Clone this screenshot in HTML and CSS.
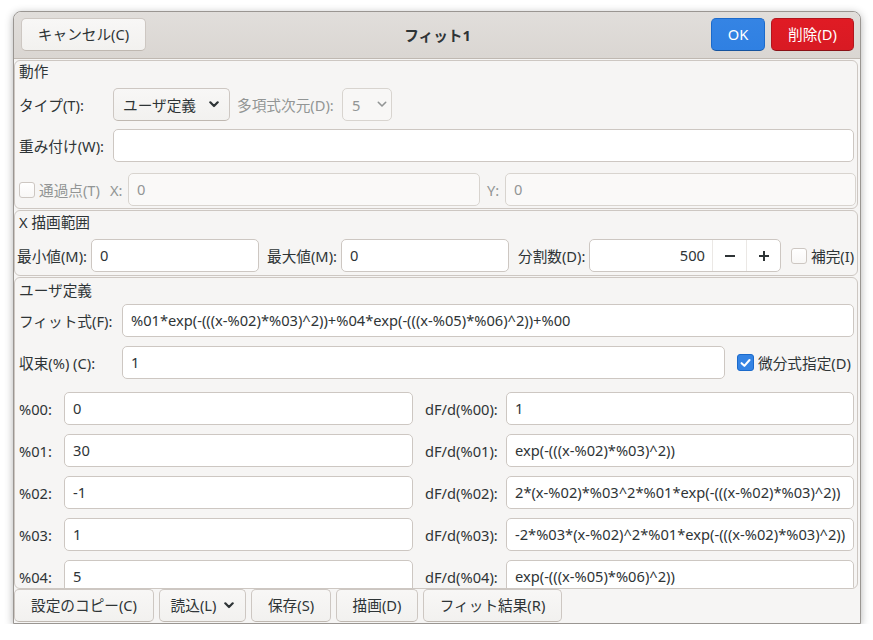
FILE: index.html
```html
<!DOCTYPE html>
<html lang="ja">
<head>
<meta charset="utf-8">
<title>フィット1</title>
<link rel="stylesheet" href="styles.css">
</head>
<body>
<div class="window">
  <header class="headerbar">
    <div class="hb-left"><button class="btn">キャンセル(C)</button></div>
    <div class="title">フィット1</div>
    <div class="hb-right">
      <button class="btn btn-ok">OK</button>
      <button class="btn btn-del">削除(D)</button>
    </div>
  </header>

  <div class="content">
    <section class="frame f1">
      <div class="ftitle">動作</div>
      <div class="row row-type">
        <span class="lbl lbl-94">タイプ(T):</span>
        <button class="combo combo-type">ユーザ定義<svg class="chev" viewBox="0 0 10 7" width="10" height="7"><path d="M1.3 1.3 L5 5 L8.7 1.3"/></svg></button>
        <span class="lbl dis lbl-deg">多項式次元(D):</span>
        <button class="combo combo-deg dis">5<svg class="chev" viewBox="0 0 10 7" width="10" height="7"><path d="M1.3 1.3 L5 5 L8.7 1.3"/></svg></button>
      </div>
      <div class="row row-weight">
        <span class="lbl lbl-94">重み付け(W):</span>
        <div class="entry grow"></div>
      </div>
      <div class="row row-pass">
        <span class="check"></span>
        <span class="lbl dis lbl-pass">通過点(T)</span>
        <span class="lbl dis lbl-x">X:</span>
        <div class="entry disabled e-x">0</div>
        <span class="lbl dis lbl-y">Y:</span>
        <div class="entry grow disabled">0</div>
      </div>
    </section>

    <section class="frame f2">
      <div class="ftitle">X 描画範囲</div>
      <div class="row row-range">
        <span class="lbl l-min">最小値(M):</span>
        <div class="entry e-range">0</div>
        <span class="lbl l-max">最大値(M):</span>
        <div class="entry e-range">0</div>
        <span class="lbl l-div">分割数(D):</span>
        <div class="spin">
          <div class="spin-val">500</div>
          <div class="spin-btn"><svg viewBox="0 0 12 12" width="12" height="12"><path d="M1 6 H11"/></svg></div>
          <div class="spin-btn"><svg viewBox="0 0 12 12" width="12" height="12"><path d="M1 6 H11 M6 1 V11"/></svg></div>
        </div>
        <span class="check c-interp"></span>
        <span class="lbl l-interp">補完(I)</span>
      </div>
    </section>

    <section class="frame f3">
      <div class="ftitle">ユーザ定義</div>
      <div class="row row-fit">
        <span class="lbl lbl-103">フィット式(F):</span>
        <div class="entry grow">%01*exp(-(((x-%02)*%03)^2))+%04*exp(-(((x-%05)*%06)^2))+%00</div>
      </div>
      <div class="row row-conv">
        <span class="lbl lbl-103">収束(%) (C):</span>
        <div class="entry e-conv">1</div>
        <span class="check checked c-deriv"><svg viewBox="0 0 16 16" width="16" height="16"><path d="M3.8 8.2 L6.8 11 L12.3 4.8"/></svg></span>
        <span class="lbl l-deriv">微分式指定(D)</span>
      </div>
      <div class="params">
        <span class="lbl">%00:</span>
        <div class="entry">0</div>
        <span class="lbl pl">dF/d(%00):</span>
        <div class="entry">1</div>

        <span class="lbl">%01:</span>
        <div class="entry">30</div>
        <span class="lbl pl">dF/d(%01):</span>
        <div class="entry">exp(-(((x-%02)*%03)^2))</div>

        <span class="lbl">%02:</span>
        <div class="entry">-1</div>
        <span class="lbl pl">dF/d(%02):</span>
        <div class="entry">2*(x-%02)*%03^2*%01*exp(-(((x-%02)*%03)^2))</div>

        <span class="lbl">%03:</span>
        <div class="entry">1</div>
        <span class="lbl pl">dF/d(%03):</span>
        <div class="entry">-2*%03*(x-%02)^2*%01*exp(-(((x-%02)*%03)^2))</div>

        <span class="lbl">%04:</span>
        <div class="entry">5</div>
        <span class="lbl pl">dF/d(%04):</span>
        <div class="entry">exp(-(((x-%05)*%06)^2))</div>
      </div>
    </section>
  </div>

  <footer class="actions">
    <button class="btn a1">設定のコピー(C)</button>
    <button class="btn a2">読込(L)<svg class="chev" viewBox="0 0 10 7" width="10" height="7"><path d="M1.3 1.3 L5 5 L8.7 1.3"/></svg></button>
    <button class="btn a3">保存(S)</button>
    <button class="btn a4">描画(D)</button>
    <button class="btn a5">フィット結果(R)</button>
  </footer>
</div>
</body>
</html>
```

FILE: styles.css
```css
* { box-sizing: border-box; }

html, body {
  margin: 0;
  padding: 0;
  background: #ffffff;
}

body {
  font-family: "Noto Sans", "Noto Sans CJK JP", sans-serif;
  font-size: 14.67px;
  line-height: 20px;
  color: #2e3436;
}

.window {
  margin: 11px 0 0 13px;
  width: 848px;
  height: 613px;
  border: 1px solid #9a9692;
  border-radius: 8px 8px 0 0;
  box-shadow: 0 2px 8px rgba(0, 0, 0, 0.3);
  background: #f6f5f4;
  display: flex;
  flex-direction: column;
  overflow: hidden;
}

/* header bar */
.headerbar {
  flex: none;
  height: 47px;
  display: grid;
  grid-template-columns: 1fr auto 1fr;
  align-items: center;
  padding: 0 6px 1px 7px;
  background: linear-gradient(to top, #dad6d2, #e1dedb);
  border-bottom: 1px solid #bfb8b1;
  border-radius: 7px 7px 0 0;
}

.hb-left { display: flex; }
.hb-right { display: flex; justify-content: flex-end; gap: 6px; }

.title {
  font-weight: bold;
  color: #2e3436;
}

.btn {
  font: inherit;
  line-height: 1;
  color: #2e3436;
  height: 33px;
  padding: 0 10px;
  border: 1px solid #cdc7c2;
  border-bottom-color: #bfb8b1;
  border-radius: 5px;
  background: linear-gradient(to top, #f2f1ef, #f8f7f6);
  display: inline-flex;
  align-items: center;
  justify-content: center;
  white-space: nowrap;
  flex: none;
}

.hb-left .btn { width: 125px; }

.btn-ok {
  width: 54px;
  color: #ffffff;
  background: linear-gradient(to top, #2f80e2, #3584e4);
  border-color: #1b6acb;
  border-bottom-color: #15539e;
}

.btn-del {
  width: 83px;
  color: #ffffff;
  background: linear-gradient(to top, #d81a23, #e01b24);
  border-color: #b2161d;
  border-bottom-color: #8a1116;
}

/* content */
.content {
  flex: none;
  height: 530px;
  padding-top: 1px;
  display: flex;
  flex-direction: column;
  gap: 1px;
  overflow: hidden;
}

.frame {
  flex: none;
  margin-right: 2px;
  border: 1px solid #cdc7c2;
  border-radius: 6px;
  overflow: hidden;
  display: flex;
  flex-direction: column;
}

.f1 { height: 149px; padding: 0 3px 0 4px; }
.f2 { height: 66px; padding: 1px 3px 0 2px; }
.f3 { height: 312px; padding: 2px 3px 0 4px; }

.ftitle { height: 20px; line-height: 20px; }
.f2 .ftitle { padding-left: 2px; }

.row {
  display: flex;
  align-items: center;
  height: 33px;
  flex: none;
}

.lbl { white-space: nowrap; flex: none; }
.dis { color: #929595; }

.lbl-94 { width: 94px; }
.lbl-103 { width: 103px; }

.row-type { margin-top: 7px; }
.row-weight { margin-top: 8px; }
.row-pass { margin-top: 11px; margin-right: -2px; }

.entry {
  height: 33px;
  border: 1px solid #cdc7c2;
  border-radius: 5px;
  background: #ffffff;
  padding: 0 8px;
  line-height: 31px;
  white-space: nowrap;
  overflow: hidden;
  color: #2e3436;
}

.entry.disabled {
  background: #faf9f8;
  border-color: #d8d4cf;
  color: #929595;
}

.grow { flex: 1; min-width: 0; }

.combo {
  font: inherit;
  color: #2e3436;
  height: 33px;
  border: 1px solid #cdc7c2;
  border-bottom-color: #bfb8b1;
  border-radius: 5px;
  background: linear-gradient(to top, #f2f1ef, #f8f7f6);
  display: inline-flex;
  align-items: center;
  padding: 0 0 0 9px;
  flex: none;
}

.combo-type { width: 117px; gap: 13px; }
.combo-deg { width: 50px; gap: 17px; border-color: #d8d4cf; background: #f8f7f6; color: #929595; }

.lbl-deg { margin-left: 7px; width: 105px; }

.chev { flex: none; }
.chev path { fill: none; stroke: currentColor; stroke-width: 2.2; stroke-linecap: round; stroke-linejoin: round; }
.combo-deg .chev path { stroke-width: 1.6; }

.check {
  flex: none;
  width: 16px;
  height: 16px;
  border: 1px solid #cdc7c2;
  border-radius: 3px;
  background: linear-gradient(to top, #f8f7f6, #ffffff);
  display: inline-flex;
  align-items: center;
  justify-content: center;
}

.check.checked {
  background: #3584e4;
  border-color: #1b6acb;
}

.check svg path { fill: none; stroke: #ffffff; stroke-width: 2.2; stroke-linecap: round; stroke-linejoin: round; }

.lbl-pass { margin-left: 4px; width: 71px; }
.lbl-x { width: 18px; }
.e-x { width: 352px; flex: none; }
.lbl-y { margin-left: 7px; width: 18px; }

/* range row */
.row-range { margin-top: 7px; }
.l-min { width: 74px; }
.e-range { width: 168px; flex: none; }
.l-max { margin-left: 8px; width: 74px; }
.l-div { margin-left: 9px; width: 71px; }

.spin {
  flex: none;
  width: 192px;
  height: 33px;
  border: 1px solid #cdc7c2;
  border-radius: 5px;
  background: #ffffff;
  display: flex;
}

.spin-val {
  flex: 1;
  text-align: right;
  padding-right: 7px;
  line-height: 31px;
}

.spin-btn {
  width: 34px;
  border-left: 1px solid #ebe8e5;
  display: flex;
  align-items: center;
  justify-content: center;
  flex: none;
}

.spin-btn svg path { stroke: #2e3436; stroke-width: 2; fill: none; }

.c-interp { margin-left: 10px; }
.l-interp { margin-left: 4px; }

/* user defined */
.row-fit { margin-top: 4px; }
.row-conv { margin-top: 9px; }
.e-conv { width: 603px; flex: none; }
.c-deriv { margin-left: 12px; width: 17px; height: 17px; }
.l-deriv { margin-left: 4px; }

.params {
  margin-top: 13px;
  display: grid;
  grid-template-columns: 45px 349px 93px 348px;
  grid-auto-rows: 33px;
  row-gap: 9px;
  align-items: center;
}

.pl { padding-left: 12px; }

/* bottom actions */
.actions {
  flex: none;
  height: 34px;
  display: flex;
  gap: 5px;
  align-items: flex-start;
}

.a1 { width: 140px; }
.a2 { width: 87px; gap: 8px; }
.a3 { width: 80px; }
.a4 { width: 82px; }
.a5 { width: 139px; }
```
